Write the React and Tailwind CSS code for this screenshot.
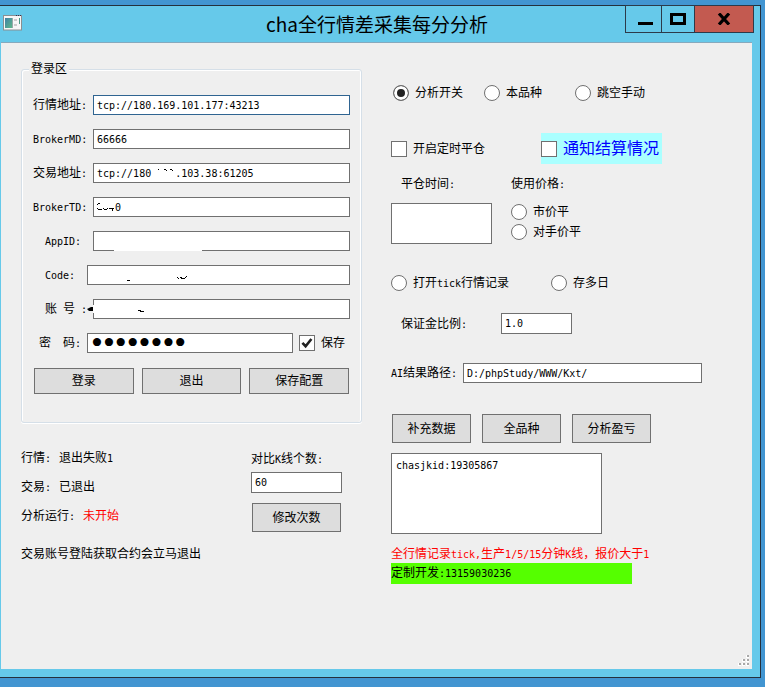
import { useState } from "react";

const cjk = "font-['Liberation_Sans','Noto_Sans_CJK_SC',sans-serif]"
const field = "min-w-0 border bg-white pl-[3px] font-['DejaVu_Sans_Mono','Noto_Sans_CJK_SC',monospace] text-[10px] leading-4 text-black outline-none"

// latin runs are half-width next to the 12px chinese glyphs
function Mixed({ text }) {
    return text.split(/([\x20-\x7e]+)/).map((part, i) =>
        i % 2 ? (
            <span key={i} className="font-['DejaVu_Sans_Mono',monospace] text-[10px] leading-none whitespace-pre">{part}</span>
        ) : (
            part
        )
    )
}

function Radio({ id, name, label, checked }) {
    return (
        <label htmlFor={id} className="flex h-4 items-center gap-[6px] whitespace-nowrap">
            <input
                id={id}
                type="radio"
                name={name}
                defaultChecked={checked}
                className="size-4 shrink-0 appearance-none rounded-full border border-[#707070] bg-white checked:bg-[#222] checked:shadow-[inset_0_0_0_3px_#fff]"
            />
            <span><Mixed text={label} /></span>
        </label>
    )
}

function CheckBox({ id, label, checked: initial = false, classes = "gap-[6px]" }) {
    const [checked, setChecked] = useState(initial)

    return (
        <label htmlFor={id} className={`flex items-center whitespace-nowrap ${classes}`}>
            <span className="relative size-4 shrink-0">
                <input
                    id={id}
                    type="checkbox"
                    checked={checked}
                    onChange={(e) => setChecked(e.target.checked)}
                    className="block size-4 appearance-none border border-[#707070] bg-white"
                />
                {checked && (
                    <svg viewBox="0 0 16 16" className="pointer-events-none absolute inset-0 size-4">
                        <path d="M3.4 7.8 L6.6 11.2 L12.4 4" fill="none" stroke="#222" strokeWidth="2.6" />
                    </svg>
                )}
            </span>
            <span>{label}</span>
        </label>
    )
}

function Button({ text, classes = "" }) {
    return (
        <button type="button" className={`border border-[#707070] bg-[#dddddd] text-center ${classes}`}>
            {text}
        </button>
    )
}

function Row({ id, label, labelClass = "w-[60px]", children }) {
    return (
        <div className="relative flex h-5 items-center">
            <label htmlFor={id} className={`shrink-0 leading-4 whitespace-pre ${labelClass}`}>
                <Mixed text={label} />
            </label>
            {children}
        </div>
    )
}

function TitleBar() {
    return (
        <header className="grid h-9 grid-cols-[1fr_auto_1fr] pr-1.5">
            <svg viewBox="0 0 19 16" className="mt-[9px] ml-[3px] h-4 w-[19px]">
                <defs>
                    <linearGradient id="pane" x1="0" y1="0" x2="1" y2="1">
                        <stop offset="0" stopColor="#3f7fa6" />
                        <stop offset="1" stopColor="#5fb98a" />
                    </linearGradient>
                </defs>
                <rect x="0.5" y="0.5" width="18" height="14.5" fill="#f7f7f7" stroke="#8a8f92" />
                <path d="M13 .5h1M15 .5h1M17 .5h1" stroke="#335" />
                <rect x="2" y="3" width="7" height="10" fill="url(#pane)" />
                <rect x="9" y="3" width="1" height="10" fill="#9aa" />
                <rect x="11" y="4" width="3" height="2" fill="#ccc" />
                <rect x="11" y="9" width="3" height="2" fill="#ccc" />
                <rect x="16" y="3" width="1" height="6" fill="#4c9a86" />
            </svg>
            <h1 className="self-center text-[19px] leading-9 whitespace-nowrap font-['Noto_Sans_CJK_SC',sans-serif]">cha全行情差采集每分分析</h1>
            <div className="-mt-px flex h-7 justify-self-end border border-[#2c3a4a]">
                <button type="button" aria-label="最小化" className="flex w-9 items-center justify-center border-r border-[#2c3a4a]">
                    <svg viewBox="0 0 16 16" className="mt-1 ml-1 size-4"><path d="M0 10.5h15" stroke="#000" strokeWidth="3" /></svg>
                </button>
                <button type="button" aria-label="最大化" className="flex w-[33px] items-center justify-center border-r border-[#2c3a4a]">
                    <svg viewBox="0 0 16 12" className="h-3 w-4"><rect x="1.5" y="1.5" width="13" height="9" fill="none" stroke="#000" strokeWidth="3" /></svg>
                </button>
                <button type="button" aria-label="关闭" className="flex w-[58px] items-center justify-center bg-[#c35a50]">
                    <svg viewBox="0 0 14 12" className="h-3 w-3.5"><path d="M2 0.5 L12 11.5 M12 0.5 L2 11.5" stroke="#000" strokeWidth="3.2" /></svg>
                </button>
            </div>
        </header>
    )
}

function LoginBox() {
    return (
        <fieldset className="min-w-0 rounded-[3px] border border-[#d5dfe8] shadow-[inset_1px_1px_0_#fff,inset_-1px_0_0_#fff,0_1px_0_#fff]">
            <legend className="ml-[7px] bg-[#efefef] px-[2px] leading-4">登录区</legend>
            <div className="px-[11px] pt-[18px] pb-7">
                <div className="flex flex-col gap-3.5">
                    <Row id="md" label="行情地址:">
                        <input id="md" defaultValue="tcp://180.169.101.177:43213" className={`${field} h-5 flex-1 border-[#2f6491]`} />
                    </Row>
                    <Row id="brokerMd" label="BrokerMD:">
                        <input id="brokerMd" defaultValue="66666" className={`${field} h-5 flex-1 border-[#707070]`} />
                    </Row>
                    <Row id="td" label="交易地址:">
                        <input id="td" defaultValue="tcp://180    .103.38:61205" className={`${field} h-5 flex-1 border-[#707070]`} />
                        <svg viewBox="0 0 16 2" className="absolute top-[6px] left-[125px] h-[2px] w-4">
                            <path d="M0 .5h1M6 .5h2M8 1.5h1M12 .5h2M14 1.5h1" stroke="#000" />
                        </svg>
                    </Row>
                    <Row id="brokerTd" label="BrokerTD:">
                        <input id="brokerTd" defaultValue="   0" className={`${field} h-5 flex-1 border-[#707070]`} />
                        <svg viewBox="0 0 18 9" className="absolute top-[6px] left-[64px] h-[9px] w-[18px]">
                            <path d="M1 .5h2M0 1.5h1M0 5.5h1M1 6.5h4M6 5.5h1M7 6.5h3M10 5.5h1M12 5.5h5M15 6.5h1M15 7.5h1" fill="none" stroke="#000" />
                        </svg>
                    </Row>
                    <Row id="appId" label="AppID:" labelClass="w-[60px] pl-3">
                        <input id="appId" defaultValue="" className={`${field} h-5 flex-1 border-[#707070]`} />
                        <span className="absolute bottom-0 left-[81px] h-px w-[88px] bg-white" />
                    </Row>
                    <Row id="code" label="Code:" labelClass="w-[54px] pl-3">
                        <input id="code" defaultValue="" className={`${field} h-5 flex-1 border-[#707070]`} />
                        <svg viewBox="0 0 60 6" className="absolute top-[10px] left-[94px] h-[6px] w-[60px]">
                            <path d="M0 5.5h3M50 2.5h1M51 3.5h1M53 2.5h2M54 3.5h3M58 2.5h1M57 3.5h1M59 1.5h1" fill="none" stroke="#000" />
                        </svg>
                    </Row>
                    <Row id="account" label="账 号 :" labelClass="w-[60px] pl-3">
                        <input id="account" defaultValue="" className={`${field} h-5 flex-1 border-[#707070]`} />
                        <svg viewBox="0 0 60 10" className="absolute top-[5px] left-[54px] h-[10px] w-[60px]">
                            <path d="M6 1h1v8h-1z" fill="#fff" />
                            <path d="M0 5L4 3L6 3V7H2z" fill="#000" />
                            <path d="M51 6.5h3M53 7.5h4" stroke="#000" />
                        </svg>
                    </Row>
                    <Row id="pwd" label="密  码:" labelClass="w-[54px] pl-1.5">
                        <input
                            id="pwd"
                            type="password"
                            defaultValue="66666666"
                            className="h-5 min-w-0 flex-1 border border-[#707070] bg-white pl-[3px] font-['Liberation_Serif',serif] text-[34px] leading-4 outline-none"
                        />
                        <CheckBox id="save" label="保存" checked classes="gap-[6px] ml-1.5 mr-[5px]" />
                    </Row>
                </div>
                <div className="mt-[15px] grid grid-cols-3 gap-2 px-px">
                    <Button text="登录" classes="h-[26px]" />
                    <Button text="退出" classes="h-[26px]" />
                    <Button text="保存配置" classes="h-[26px]" />
                </div>
            </div>
        </fieldset>
    )
}

function Status() {
    return (
        <div className="mt-[27px] flex justify-between pr-5">
            <div className="flex flex-col gap-[13px] leading-4 whitespace-nowrap">
                <p className="flex h-4 gap-2"><span><Mixed text="行情:" /></span><span><Mixed text="退出失败1" /></span></p>
                <p className="flex h-4 gap-2"><span><Mixed text="交易:" /></span><span>已退出</span></p>
                <p className="flex h-4 gap-2"><span><Mixed text="分析运行:" /></span><span className="text-[#ff0000]">未开始</span></p>
                <p className="mt-[9px]">交易账号登陆获取合约会立马退出</p>
            </div>
            <div className="flex w-[91px] flex-col pt-px">
                <label htmlFor="klines" className="h-4 leading-4 whitespace-nowrap"><Mixed text="对比K线个数:" /></label>
                <input id="klines" defaultValue="60" className={`${field} mt-[5px] h-[21px] border-[#707070]`} />
                <Button text="修改次数" classes="mx-px mt-[10px] h-[29px]" />
            </div>
        </div>
    )
}

function Settings() {
    return (
        <section className="min-w-0 pt-[42px] leading-4">
            <div className="flex pl-0.5">
                <div className="w-[91px]"><Radio id="analyse" name="mode" label="分析开关" checked /></div>
                <div className="w-[91px]"><Radio id="single" name="mode" label="本品种" /></div>
                <Radio id="jump" name="mode" label="跳空手动" />
            </div>

            <div className="mt-8 flex h-[31px]">
                <div className="flex w-[150px] items-center"><CheckBox id="timed" label="开启定时平仓" /></div>
                <CheckBox id="notify" label="通知结算情况" classes="gap-[6px] bg-[#aaffff] pr-[3px] text-base text-[#0000ff]" />
            </div>

            <div className="mt-3 flex">
                <div className="flex w-[120px] flex-col gap-[11px]">
                    <label htmlFor="closeTime" className="h-4 pl-[10px]"><Mixed text="平仓时间:" /></label>
                    <textarea id="closeTime" className="h-[41px] w-[101px] resize-none border border-[#707070] bg-white" />
                </div>
                <div role="radiogroup" aria-label="使用价格" className="flex flex-col gap-1">
                    <span className="mb-2 h-4"><Mixed text="使用价格:" /></span>
                    <Radio id="market" name="price" label="市价平" />
                    <Radio id="opponent" name="price" label="对手价平" />
                </div>
            </div>

            <div className="mt-[31px] flex">
                <div className="w-[160px]"><Radio id="tick" name="record" label="打开tick行情记录" /></div>
                <Radio id="days" name="record" label="存多日" />
            </div>

            <div className="mt-[22px] flex items-center pl-[10px]">
                <label htmlFor="margin" className="h-4 w-[100px]"><Mixed text="保证金比例:" /></label>
                <input id="margin" defaultValue="1.0" className={`${field} h-[21px] w-[71px] border-[#707070]`} />
            </div>

            <div className="mt-[29px] flex items-center pr-[50px]">
                <label htmlFor="path" className="h-4 w-[72px] shrink-0 whitespace-nowrap"><Mixed text="AI结果路径:" /></label>
                <input id="path" defaultValue="D:/phpStudy/WWW/Kxt/" className={`${field} h-5 flex-1 border-[#707070]`} />
            </div>

            <div className="mt-[31px] flex gap-[11px] pl-px">
                <Button text="补充数据" classes="h-[29px] w-[79px]" />
                <Button text="全品种" classes="h-[29px] w-[79px]" />
                <Button text="分析盈亏" classes="h-[29px] w-[79px]" />
            </div>

            <textarea
                aria-label="日志"
                defaultValue="chasjkid:19305867"
                className="mt-[10px] block h-[81px] w-[211px] resize-none border border-[#707070] bg-white px-1 py-1 font-['DejaVu_Sans_Mono',monospace] text-[10px] leading-4 outline-none"
            />
            <p className="mt-3 h-4 whitespace-nowrap text-[#ff0000]"><Mixed text="全行情记录tick,生产1/5/15分钟K线，报价大于1" /></p>
            <p className="mt-px h-[21px] w-[241px] bg-[#55ff00] leading-5"><Mixed text="定制开发:13159030236" /></p>
        </section>
    )
}

function App() {
    return (
        <div className={`flex min-h-screen flex-col bg-[#4295d1] pt-[5px] pr-1 pb-[9px] text-[12px] text-black ${cjk}`}>
            <div className="flex flex-1 flex-col border border-l-0 border-[#25303c] bg-[#66c9ea]">
                <TitleBar />
                <main className="mr-2 mb-2 ml-px flex flex-1 flex-col border-t border-[#86a9bd] bg-[#efefef]">
                    <div className="grid grid-cols-[17fr_18fr] gap-[29px] pl-5">
                        <section className="min-w-0 pt-[18px]">
                            <LoginBox />
                            <Status />
                        </section>
                        <Settings />
                    </div>
                    <svg viewBox="0 0 12 12" className="mt-auto mr-0.5 mb-0.5 ml-auto size-3">
                        <path d="M8 0h3v3h-3zM4 4h3v3h-3zM8 4h3v3h-3zM0 8h3v3h-3zM4 8h3v3h-3zM8 8h3v3h-3z" fill="#fff" />
                        <path d="M9 0h2v2h-2zM5 4h2v2h-2zM9 4h2v2h-2zM1 8h2v2h-2zM5 8h2v2h-2zM9 8h2v2h-2z" fill="#a8a8a8" />
                    </svg>
                </main>
            </div>
        </div>
    )
}

export default App;
